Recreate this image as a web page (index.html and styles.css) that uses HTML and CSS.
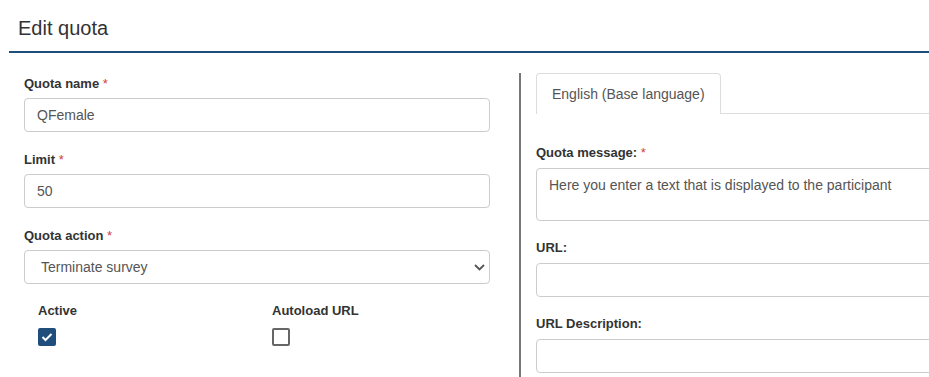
FILE: index.html
```html
<!DOCTYPE html>
<html lang="en">
<head>
    <meta charset="UTF-8">
    <meta name="viewport" content="width=device-width, initial-scale=1.0">
    <title>Edit quota</title>
    <link rel="stylesheet" href="styles.css">
</head>
<body>

<div class="page">
    <div class="pageHeader">
        <h1>Edit quota</h1>
    </div>

    <div class="quotaRow">
        <!-- Left: general quota settings -->
        <div class="leftCol">
            <div class="formGroup">
                <label>Quota name <span class="req">*</span></label>
                <div class="field">QFemale</div>
            </div>

            <div class="formGroup">
                <label>Limit <span class="req">*</span></label>
                <div class="field">50</div>
            </div>

            <div class="formGroup">
                <label>Quota action <span class="req">*</span></label>
                <div class="field selectField">
                    <span>Terminate survey</span>
                    <svg width="11" height="7" viewBox="0 0 11 7">
                        <path d="M1 1 L5.5 5.5 L10 1" fill="none" stroke="#555" stroke-width="1.8"/>
                    </svg>
                </div>
            </div>

            <div class="checkRow">
                <div class="checkCol">
                    <label>Active</label>
                    <span class="checkBox checked">
                        <svg width="12" height="10" viewBox="0 0 12 10">
                            <path d="M1.5 5 L4.5 8 L10.5 2" fill="none" stroke="#fff" stroke-width="2"/>
                        </svg>
                    </span>
                </div>
                <div class="checkCol">
                    <label>Autoload URL</label>
                    <span class="checkBox"></span>
                </div>
            </div>
        </div>

        <!-- Right: language specific texts -->
        <div class="rightCol">
            <div class="tabs">
                <div class="tab">English (Base language)</div>
            </div>

            <div class="tabBody">
                <div class="formGroup">
                    <label>Quota message: <span class="req">*</span></label>
                    <div class="field textArea">Here you enter a text that is displayed to the participant</div>
                </div>

                <div class="formGroup">
                    <label>URL:</label>
                    <div class="field"></div>
                </div>

                <div class="formGroup">
                    <label>URL Description:</label>
                    <div class="field"></div>
                </div>
            </div>
        </div>
    </div>
</div>

</body>
</html>
```

FILE: styles.css
```css
body {
    margin: 0;
    background-color: #fff;
    color: #333;
    font-family: "Liberation Sans", Arial, sans-serif;
    overflow: hidden;
}

.page {
    margin-left: 9px;
    overflow: hidden;
    height: 377px;
}

.pageHeader {
    border-bottom: 2px solid #1f4e7d;
    padding: 16px 0 11px 9px;
}

h1 {
    margin: 0;
    font-size: 20px;
    line-height: 24px;
    font-weight: normal;
    color: #333;
}

.quotaRow {
    display: grid;
    grid-template-columns: 512px 500px;
    margin-top: 20px;
}

.leftCol {
    padding: 2px 29px 0 15px;
    border-right: 2px solid #777;
    min-height: 304px;
}

.rightCol {
    padding-left: 15px;
}

label {
    display: block;
    font-size: 13px;
    line-height: 18px;
    font-weight: bold;
    color: #333;
    margin-bottom: 5px;
}

.req {
    color: #d0413e;
    font-weight: normal;
}

.formGroup {
    margin-bottom: 19px;
}

.field {
    box-sizing: border-box;
    height: 34px;
    border: 1px solid #ccc;
    border-radius: 4px;
    padding: 0 12px;
    font-size: 14px;
    line-height: 32px;
    color: #555;
    background-color: #fff;
}

.selectField {
    display: flex;
    align-items: center;
    justify-content: space-between;
    padding: 0 4px 0 16px;
}

.textArea {
    height: 53px;
    line-height: 20px;
    padding: 6px 12px;
}

.checkRow {
    display: grid;
    grid-template-columns: 1fr 1fr;
    margin-top: -1px;
}

.checkCol {
    padding-left: 14px;
}

.checkCol:last-child {
    padding-left: 15px;
}

.checkCol label {
    margin-bottom: 8px;
}

.checkBox {
    box-sizing: border-box;
    display: flex;
    align-items: center;
    justify-content: center;
    width: 18px;
    height: 18px;
    border: 2px solid #666;
    border-radius: 2px;
    background-color: #fff;
}

.checkBox.checked {
    border-color: #1f4e7d;
    background-color: #1f4e7d;
}

.tabs {
    display: flex;
    border-bottom: 1px solid #ddd;
}

.tab {
    border: 1px solid #ddd;
    border-bottom: none;
    border-radius: 4px 4px 0 0;
    margin-bottom: -1px;
    background-color: #fff;
    padding: 10px 15px;
    font-size: 14px;
    line-height: 20px;
    color: #555;
}

.tabBody {
    padding-top: 30px;
}

.tabBody .formGroup {
    margin-bottom: 18px;
}

.tabBody label {
    margin-bottom: 6px;
}
```
